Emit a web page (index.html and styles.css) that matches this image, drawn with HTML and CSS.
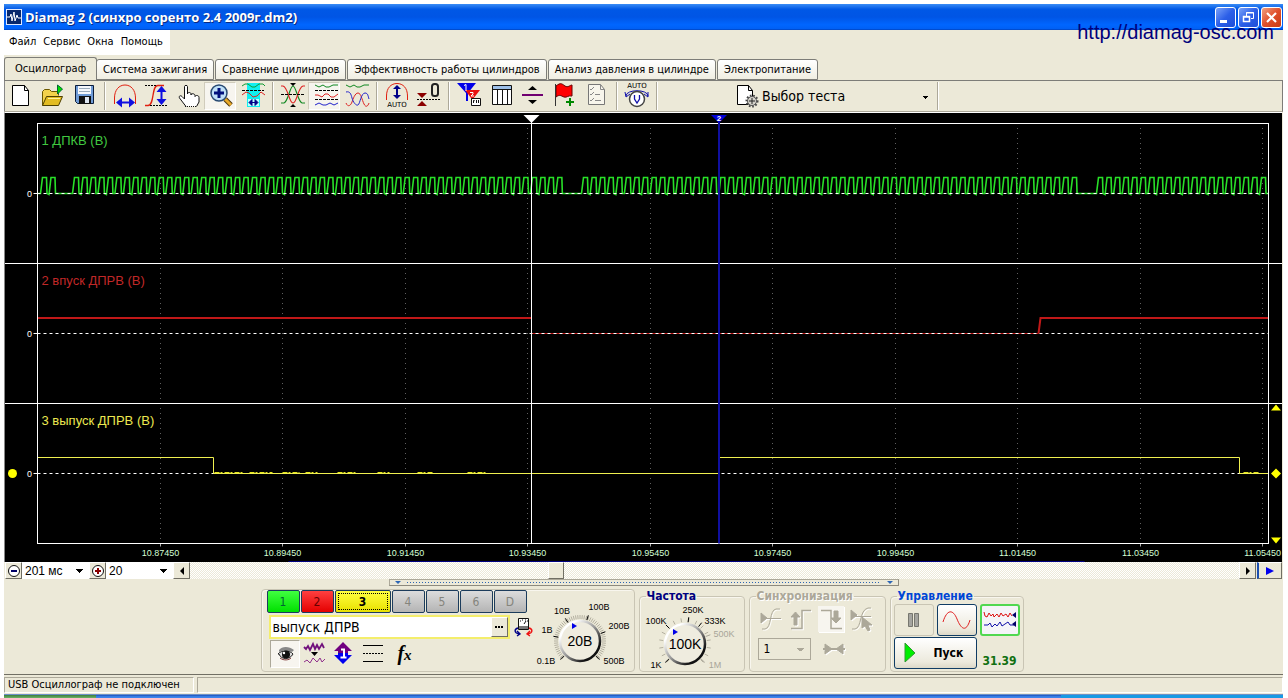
FILE: index.html
```html
<!DOCTYPE html>
<html lang="ru">
<head>
<meta charset="utf-8">
<title>Diamag 2</title>
<link rel="stylesheet" href="styles.css">
</head>
<body>
<div class="window">
  <header class="titlebar">
    <svg class="app-icon" width="16" height="16" viewBox="0 0 16 16"><rect width="16" height="16" fill="#dfe8ff"/><rect x="1" y="1" width="14" height="14" fill="#08286c"/><path d="M1 8h3l1-3 1 7 2-9 1 9 2-6 1 3h3" fill="none" stroke="#fff"/></svg>
    <h1 class="title">Diamag 2 (синхро соренто 2.4 2009г.dm2)</h1>
    <button class="win-btn" aria-label="Свернуть"><svg width="19" height="19"><path d="M4 13.500h7" stroke="#fff" stroke-width="3"/></svg></button>
    <button class="win-btn" aria-label="Развернуть"><svg width="19" height="19" fill="none" stroke="#fff"><path d="M7.500 8V4.500h7v6H12M7 5h8"/><path d="M4.500 8.500h6v5h-6zM4 9h7" stroke-width="1.500"/></svg></button>
    <button class="win-btn win-close" aria-label="Закрыть"><svg width="19" height="19"><path d="M5 5l9 9M14 5l-9 9" stroke="#fff" stroke-width="2.200"/></svg></button>
  </header>
  <a class="site-link" href="#">http://diamag-osc.com</a>
  <nav class="menu">
    <a href="#">Файл</a><a href="#">Сервис</a><a href="#">Окна</a><a href="#">Помощь</a>
  </nav>
  <div class="tabs" role="tablist">
    <button class="tab tab-active" role="tab">Осциллограф</button>
    <button class="tab" role="tab">Система зажигания</button>
    <button class="tab" role="tab">Сравнение цилиндров</button>
    <button class="tab" role="tab">Эффективность работы цилиндров</button>
    <button class="tab" role="tab">Анализ давления в цилиндре</button>
    <button class="tab" role="tab">Электропитание</button>
  </div>

  <div class="toolbar" role="toolbar">
    <button class="tool" aria-label="Новый"><svg viewBox="0 0 32 28"><path d="M8.500 3.500h12l4 5v15h-16z" fill="#fff" stroke="#000"/><path d="M20.500 3.500v5h4" fill="none" stroke="#000"/></svg></button>
    <button class="tool" aria-label="Открыть"><svg viewBox="0 0 32 28"><path d="M6.500 23.500v-14l2-2h5l2 2h7v4" fill="#f3d24c" stroke="#6b5800"/><path d="M6.500 23.500l4-9h16l-4 9z" fill="#e2bc22" stroke="#4d4000"/><path d="M12 16.500h12" stroke="#fff3a0"/><path d="M21.500 3v9l5-5z" fill="#0d0" stroke="#063"/></svg></button>
    <button class="tool" aria-label="Сохранить"><svg viewBox="0 0 32 28"><path d="M7.500 3.500h18v18h-16l-2-2z" fill="#6f9bd6" stroke="#0b1d3a"/><path d="M10 4h13v8H10z" fill="#f4f7fc"/><path d="M11 6.500h11M11 9.500h11" stroke="#9ab"/><path d="M11 14h12v8H11z" fill="#111"/><path d="M17 15h4v6h-4z" fill="#dde5f0"/></svg></button>
    <i class="sep"></i>
    <button class="tool" aria-label="Развёртка"><svg viewBox="0 0 32 28"><path d="M6.500 22v-6C6.500 8 11 3 17 3s10.500 5 10.500 13v6" fill="none" stroke="#e02010"/><path d="M8 20.500l6-5v4h7v-4l6 5-6 5v-4h-7v4z" fill="#1010e0"/></svg></button>
    <button class="tool" aria-label="Усиление"><svg viewBox="0 0 32 28"><path d="M5 23.500h3C15 23 11 3.500 18 3.500h6" fill="none" stroke="#e02010" stroke-width="1.300"/><path d="M5 3.500h12M10 23.500h17" stroke="#000" stroke-dasharray="2 1"/><path d="M21.500 4l5 6h-4v7h4l-5 6-5-6h4v-7h-4z" fill="#1010e0"/></svg></button>
    <button class="tool" aria-label="Рука"><svg viewBox="0 0 32 28"><path d="M14 24.500L7.500 16c-1-2 1-3 2.500-1.500l2.500 2.500V4.500c0-1.500 3-1.500 3 0V12c0-2 3.500-2 3.500 0v1c0-2 4-1.500 4 .5v1c.5-1.500 4-1.500 4 1V20l-2.500 4.500" fill="#fff" stroke="#111"/><path d="M13 24.500h12" stroke="#111" stroke-dasharray="1 1"/></svg></button>
    <button class="tool tool-on" aria-label="Масштаб"><svg viewBox="0 0 32 28"><path d="M21 17l6 6" stroke="#4b3610" stroke-width="5"/><path d="M21 17l6 6" stroke="#e8a92a" stroke-width="3"/><circle cx="15" cy="11" r="8" fill="#bfe0f8" stroke="#284a72" stroke-width="1.500"/><path d="M15 6v10M10 11h10" stroke="#00107c" stroke-width="3"/></svg></button>
    <button class="tool" aria-label="Окно измерения"><svg viewBox="0 0 32 28"><path d="M11 1h13v24H11z" fill="#10f0f0"/><path d="M6 4l3-2h3l4 3h3l4-3h4l2 2" fill="none" stroke="#119a33"/><path d="M6 13l4-3 3 1 4 4 4-1 4-4 4 3" fill="none" stroke="#d22"/><path d="M6 8.500h22" stroke="#000" stroke-dasharray="3 1"/><path d="M12 17h11v7H12z" fill="#bff"/><path d="M13 20.500l3-3v6zM22 20.500l-3-3v6zM15 20.500h5" fill="#008" stroke="#008"/></svg></button>
    <i class="sep"></i>
    <button class="tool" aria-label="Выравнивание"><svg viewBox="0 0 32 28"><path d="M5 21h3C12 20 14 4 17 4s5 16 9 17h3" fill="none" stroke="#118822" stroke-width="1.200"/><path d="M5 4h2c5 1 6 17 10 17S22 5 27 4h2" fill="none" stroke="#d22" stroke-width="1.200"/><path d="M5 12.500h24" stroke="#000" stroke-dasharray="3 1"/><path d="M14 1h6l-3 3zM14 25h6l-3-3z"/></svg></button>
    <button class="tool tool-on" aria-label="Раздельно"><svg viewBox="0 0 32 28" fill="none"><path d="M7 3l4 2 4-2 3 2h3l4-2h5" stroke="#118822"/><path d="M7 13l3 0 4 2 3-3h3l3 3h3l4-3" stroke="#d22"/><path d="M7 23l4-2 4 2h3l4-2 4 2 4-2" stroke="#22c"/><path d="M7 8.500h23M7 17.500h23" stroke="#000" stroke-dasharray="3 1"/></svg></button>
    <button class="tool" aria-label="Совместно"><svg viewBox="0 0 32 28" fill="none"><path d="M6 3l4 2 4-2 3 2h3l4-2h5" stroke="#118822"/><path d="M6 21c2 5 5 2 6-1s3-9 6-9 4 7 6 11 4 2 5-1" stroke="#d22"/><path d="M6 10c4-1 5 2 6 6s4 8 6 7 3-12 7-12c3 0 3 3 4 6" stroke="#22c"/></svg></button>
    <i class="sep"></i>
    <button class="tool" aria-label="Авто амплитуда"><svg viewBox="0 0 32 28"><path d="M6.500 18v-4C6.500 6 11 1.500 17 1.500S27.500 6 27.500 14v4" fill="none" stroke="#e02010"/><path d="M17 3l4 4h-3v6h3l-4 4-4-4h3V7h-3z" fill="#008"/><text x="17" y="25" class="auto">AUTO</text></svg></button>
    <button class="tool" aria-label="Установка нуля"><svg viewBox="0 0 32 28"><path d="M5 11h10l-5 5zM5 24h10l-5-5z" fill="#8b0000"/><path d="M5 17.500h23" stroke="#000" stroke-dasharray="2 1"/><rect x="20" y="2" width="6" height="12" rx="2.500" fill="none" stroke="#222" stroke-width="2"/></svg></button>
    <i class="sep"></i>
    <button class="tool" aria-label="Маркеры"><svg viewBox="0 0 32 28"><path d="M5 1h19l-8 10v8h-2v-8z" fill="#0000e8"/><path d="M13 8h15l-7 9v4h-2v-5z" fill="#e81010"/><path d="M12 3.500l2-1V9" stroke="#fff" fill="none"/><path d="M18 10.500h3v1.500l-2 2h3" stroke="#fff" fill="none"/><path d="M19.500 16.500h9v7h-9z" fill="#fff" stroke="#111"/><path d="M21.500 21v-2.500h1M24.500 21v-3M26.500 21v-3" stroke="#111"/></svg></button>
    <button class="tool" aria-label="Таблица"><svg viewBox="0 0 32 28"><path d="M8.500 3.500h19v19h-19z" fill="#fff" stroke="#111"/><path d="M9 4h18v3H9z" fill="#9dbfe8"/><path d="M8.500 7.500h19M13.500 7.500v15M18.500 7.500v15M23.500 7.500v15" stroke="#111"/></svg></button>
    <button class="tool" aria-label="Разделение"><svg viewBox="0 0 32 28"><path d="M12 8h9l-4.500-4zM12 18h9l-4.500 4z"/><path d="M6 13h21" stroke="#700070" stroke-width="2"/></svg></button>
    <button class="tool" aria-label="Добавить метку"><svg viewBox="0 0 32 28"><path d="M8 4c5-4 6-2 9 0s5-1 7-1v11c-4-1-5 2-8 1s-4-3-8 0z" fill="#f00" stroke="#600"/><path d="M7.500 2v22" stroke="#333"/><path d="M22 16v8M18 20h8" stroke="#080" stroke-width="2"/></svg></button>
    <button class="tool" aria-label="Отчёт" disabled><svg viewBox="0 0 32 28"><path d="M8.500 2.500h12l4 5v15h-16z" fill="#f7f5ec" stroke="#777"/><path d="M20.500 2.500v5h4M10 7l1 1 3-3M10 12l1 1 3-3M10 18l1 1 3-3M15 12.500h5M15 18.500h6" fill="none" stroke="#888"/></svg></button>
    <i class="sep"></i>
    <button class="tool" aria-label="Авто вольтметр"><svg viewBox="0 0 32 28"><text x="17" y="6" class="auto">AUTO</text><path d="M6 14c0-7 22-7 22 0" fill="none" stroke="#11a"/><path d="M5 10l1 5 4-3M28 10l0 5-4-3" fill="none" stroke="#11a"/><circle cx="17" cy="17" r="7.500" fill="#fff" stroke="#444" stroke-width="1.500"/><path d="M14.500 13v4l2.500 4 2.500-4v-4" fill="none" stroke="#11a" stroke-width="1.300"/></svg></button>
    <i class="sep"></i>
    <label class="test-pick">
      <svg width="24" height="24" viewBox="0 0 24 24"><path d="M2.500 1.500h11l4 5v14h-15z" fill="#fff" stroke="#000"/><path d="M13.500 1.500v5h4" fill="none" stroke="#000"/><circle cx="17" cy="17" r="5" fill="#c8c8c4" stroke="#444" stroke-width="3" stroke-dasharray="1.500 1.500"/><circle cx="17" cy="17" r="4.500" fill="#d4d2ca" stroke="#555"/><path d="M17 14v6M14 17h6" stroke="#222"/></svg>
      <select class="test-select" aria-label="Выбор теста"><option>Выбор теста</option></select>
    </label>
    <i class="sep"></i>
  </div>

  <main class="scope"><svg class="scope-svg" id="scope" role="img" aria-label="Осциллограммы"></svg></main>

  <div class="scrollrow">
    <button class="mini" aria-label="Уменьшить"><svg width="16" height="16"><circle cx="8" cy="8" r="5.500" fill="#fff" stroke="#111"/><path d="M5 8h6" stroke="#006" stroke-width="2"/></svg></button>
    <select class="scale" aria-label="Развёртка"><option>201 мс</option></select>
    <button class="mini" aria-label="Увеличить"><svg width="16" height="16"><circle cx="8" cy="8" r="5.500" fill="#fff" stroke="#111"/><path d="M5 8h6M8 5v6" stroke="#800" stroke-width="2"/></svg></button>
    <select class="scale" aria-label="Масштаб"><option>20</option></select>
    <button class="mini" aria-label="Влево"><svg width="16" height="16"><path d="M10 4v8l-4-4z"/></svg></button>
    <div class="track"><button class="thumb" aria-label="Прокрутка"></button></div>
    <button class="mini" aria-label="Вправо"><svg width="16" height="16"><path d="M6 4v8l4-4z"/></svg></button>
    <button class="mini mini-end" aria-label="В конец"><svg width="16" height="16"><path d="M4 4v8l8-4z" fill="#00e"/></svg></button>
  </div>

  <div class="splitter"><svg width="8" height="4"><path d="M1 0h6L4 3z" fill="#2d66b4"/></svg><span class="dots"></span><svg width="8" height="4"><path d="M1 0h6L4 3z" fill="#2d66b4"/></svg></div>

  <section class="panels">
    <div class="group group-channel">
      <div class="channel">
        <div class="ch-buttons">
          <button class="ch ch-1">1</button><button class="ch ch-2">2</button><button class="ch ch-3">3</button><button class="ch" disabled>4</button><button class="ch" disabled>5</button><button class="ch" disabled>6</button><button class="ch" disabled>D</button>
        </div>
        <div class="name-row">
          <div class="name-box"><input class="name" value="выпуск ДПРВ" aria-label="Имя канала"><button class="more" aria-label="Ещё"><svg width="14" height="18"><path d="M3 9h2M6 9h2M9 9h2" stroke="#000" stroke-width="2"/></svg></button></div>
          <button class="ico" aria-label="Прибор"><svg width="20" height="22" viewBox="0 0 20 22"><path d="M4.500 2.500h10v11h-10z" fill="#fff" stroke="#111"/><path d="M5 10h9v3H5z" fill="#777"/><path d="M6 5h1M8 4h1M11 4h1M13 5h1M10 8l2-3" stroke="#111"/><path d="M4 12c-4 1-4 5 1 6m-2-3l3 3-3 2" fill="none" stroke="#008" stroke-width="1.400"/><path d="M15 12c4 1 4 5-1 6m2-3l-3 3 3 2" fill="none" stroke="#e11" stroke-width="1.400"/></svg></button>
        </div>
        <div class="ch-tools">
          <button class="ico ico-on" aria-label="Видимость"><svg width="28" height="26" viewBox="0 0 28 26"><path d="M8 9c3-4 10-4 15 0l-2 2c-4-2-9-2-13 0z" fill="#888"/><path d="M7 13c3-4 12-4 15 0-3 6-12 6-14 0z" fill="#ddd" stroke="#222"/><circle cx="15" cy="13.500" r="4" fill="#111"/><path d="M9 17c4 3 9 2 11 0" stroke="#733" fill="none"/><circle cx="13" cy="12" r="1.200" fill="#fff"/></svg></button>
          <button class="ico" aria-label="Фильтр"><svg width="28" height="26" viewBox="0 0 28 26" fill="none"><path d="M4 6l2 2 2-3 2 4 3-6 2 5 2-4 2 4 3-5 2 4" stroke="#70107c" stroke-width="1.800"/><path d="M11 11h7l-3.500 4z" fill="#000"/><path d="M4 21l3-2 3 3 3-5 4 4 3-4 2 4 3-3" stroke="#90308c"/></svg></button>
          <button class="ico" aria-label="Сдвиг"><svg width="30" height="26" viewBox="0 0 30 26"><path d="M15 1l9 9h-4v3H10v-3H6z" fill="#700080"/><path d="M15 23l9-9h-4v-2H10v2H6z" fill="#0000f0"/><path d="M13 8.500h3V16M12.500 16.500h6" fill="none" stroke="#fff" stroke-width="2"/></svg></button>
          <button class="ico" aria-label="Линии"><svg width="30" height="26"><path d="M5 4.500h20M5 20.500h20" stroke="#000"/><path d="M5 12.500h20" stroke="#000" stroke-dasharray="2 1"/></svg></button>
          <button class="ico fx" aria-label="Функция"><i>f</i><i class="fx-x">x</i></button>
        </div>
      </div>
      <svg class="dial" id="dial-volts" width="98" height="76" role="img" aria-label="Вольт"></svg>
    </div>

    <fieldset class="group group-freq">
      <legend class="navy">Частота</legend>
      <svg class="dial" id="dial-freq" width="98" height="76" role="img" aria-label="Частота"></svg>
    </fieldset>

    <fieldset class="group group-sync" disabled>
      <legend class="grey">Синхронизация</legend>
      <div class="sync-row">
        <svg width="26" height="26" viewBox="0 0 26 26" class="dis"><path d="M3 7v10l6-5z" fill="#aca899"/><path d="M3 12.500h20M4 23h3C14 22 11 4 18 3h4"/></svg>
        <svg width="26" height="26" viewBox="0 0 26 26" class="dis"><path d="M3 22.500h11v-18h9" stroke-width="1.500"/><path d="M7.500 6l4.500 5H9v8H6v-8H3z" fill="#aca899"/></svg>
        <svg width="26" height="26" viewBox="0 0 26 26" class="dis pressed"><path d="M3 4.500h10v18h11" stroke-width="1.500"/><path d="M18 17l-5-5h3V5h4v7h3z" fill="#aca899"/></svg>
        <svg width="26" height="26" viewBox="0 0 26 26" class="dis"><path d="M3 4v10l6-5z" fill="#aca899"/><path d="M3 10.500h20M4 23h3C14 22 11 4 20 2h3"/><path d="M14 11v11l3-2 3 5 2-1-2-5h4z" fill="#aca899"/></svg>
      </div>
      <div class="sync-row sync-low">
        <select class="sync-num" aria-label="Канал синхронизации"><option>1</option></select>
        <svg width="26" height="20" viewBox="0 0 26 20" class="dis"><path d="M4 5l7 5-7 5zM22 5l-7 5 7 5z" fill="#aca899"/><path d="M2 10h22" stroke-width="2"/></svg>
      </div>
    </fieldset>

    <fieldset class="group group-run">
      <legend class="blue">Управление</legend>
      <div class="run-grid">
        <button class="rb rb-off" aria-label="Пауза" disabled><svg width="18" height="18"><path d="M3.500 2.500h4v13h-4zM9.500 2.500h4v13h-4z" fill="#a5a5a0" stroke="#77776f"/></svg></button>
        <button class="rb" aria-label="Синус"><svg width="32" height="24"><path d="M2 14C6 1 12 1 16 11s9 14 13 1" fill="none" stroke="#e02020"/></svg></button>
        <button class="rb rb-green" aria-label="Сигналы"><svg width="34" height="24" fill="none"><path d="M1 4l1 4 2 1 2-4 2 3 2-2 1 3 3-3 2 3 2-4 2 3 3-2 2 3 2-4 2 3" stroke="#d11"/><path d="M1 17h4l2-2 2 4 3-3 2 2 3-4 2 4 3-2 3-2 2 3h4" stroke="#11a"/><path d="M33 4v6l-4-3zM33 13v6l-4-3z" fill="#006"/></svg></button>
        <button class="rb rb-start"><svg width="14" height="22"><path d="M1 1v19l10-9z" fill="#0e0" stroke="#393"/></svg><span>Пуск</span></button>
        <output class="reading">31.39</output>
      </div>
    </fieldset>
  </section>

  <footer class="status"><span class="cell cell-usb">USB Осциллограф не подключен</span><span class="cell cell-rest"></span></footer>
  <div class="taskbar"><i class="start"></i><i class="tray"></i></div>
</div>
<script src="script.js"></script>
</body>
</html>
```

FILE: styles.css
```css
* { box-sizing: border-box; }
body { margin: 0; background: #fff; font: 11px/14px "DejaVu Sans Condensed", "DejaVu Sans", sans-serif; color: #000; }
button, select, input { font: inherit; color: inherit; margin: 0; padding: 0; border: 0; border-radius: 0; background: none; }
select { appearance: none; }
a { color: inherit; text-decoration: none; }
svg { display: block; }
.window { position: relative; display: flex; flex-direction: column; min-height: 100vh; margin: 0 5px 0 4px; padding-top: 4px; background: linear-gradient(#fff 4px, #ece9d8 4px); }

.titlebar { display: flex; align-items: center; gap: 2px; height: 26px; padding: 0 1px 0 2px; background: linear-gradient(#3a8cf5, #0058e6 20%, #0055e5 50%, #0066ff 80%, #0060f5 95%, #0040b8); }
.title { flex: 1; margin: 0 0 0 1px; font: bold 13px/20px "Open Sans", "Noto Sans", sans-serif; color: #fff; text-shadow: 1px 1px #0a2a80; }
.win-btn { display: grid; place-items: center; width: 21px; height: 21px; border: 1px solid #fff; border-radius: 3px; background: linear-gradient(135deg, #7aa2f8, #2c5fe8 50%, #1e4fd8); }
.win-close { background: linear-gradient(135deg, #f0a080, #e0502c 50%, #c83c14); }
.site-link { position: absolute; right: 9px; top: 21px; font: 20px/23px "Liberation Sans", Arial, sans-serif; color: #00007c; }
.menu { display: flex; gap: 7px; align-self: flex-start; height: 25px; padding: 5px 7px 0 5px; background: #fff; }

.tabs { display: flex; align-items: flex-end; height: 25px; }
.tab { height: 21px; padding: 0 6px; border: 1px solid #7d7d78; border-radius: 3px 3px 0 0; margin-right: 1px; background: linear-gradient(#fff, #f0eee2); }
.tab-active { height: 23px; margin-right: -1px; padding: 0 10px; border-bottom: 0; background: #ece9d8; }
.toolbar { display: flex; align-items: center; height: 32px; border: solid #7d7d78; border-width: 1px 1px 1px 0; border-bottom-color: #aca899; box-shadow: inset 1px 0 #888; }
.tool { flex: none; width: 32px; height: 28px; }
.tool svg { width: 32px; height: 28px; }
.tool-on { background: #f7f5ef; border: 1px solid; border-color: #d0ccbc #fff #fff #d0ccbc; }
.tool-on svg { margin: -1px; }
.sep { flex: none; width: 8px; height: 28px; background: linear-gradient(90deg, transparent 4px, #aca899 4px, #aca899 5px, #fff 5px, #fff 6px, transparent 6px); }
.auto { font: 7px "DejaVu Sans", sans-serif; text-anchor: middle; }
.test-pick { display: flex; align-items: center; gap: 3px; width: 198px; margin-left: 75px; }
.test-select {
  flex: 1; height: 22px; font-size: 14px;
  background:
    linear-gradient(#000, #000) right 5px top 11px / 5px 1px no-repeat,
    linear-gradient(#000, #000) right 6px top 12px / 3px 1px no-repeat,
    linear-gradient(#000, #000) right 7px top 13px / 1px 1px no-repeat;
}

.scope { flex: 1; position: relative; min-height: 300px; margin-right: 1px; border-left: 1px solid #888; border-top: 1px solid #fff; background: #000; }
.scope-svg { position: absolute; width: 100%; height: 100%; }
.sig { font: 13px "Liberation Sans", sans-serif; }
.tick { font: 9px "Liberation Sans", sans-serif; fill: #d4ffd4; }
.zero { fill: #fff; }
.marker { font: bold 8px "Liberation Sans", sans-serif; fill: #fff; text-anchor: middle; }

.scrollrow { display: flex; height: 17px; padding-left: 1px; }
.mini { flex: none; width: 17px; height: 17px; display: grid; place-items: center; border: 1px solid; border-color: #fff #716f64 #716f64 #fff; background: #ece9d8; }
.mini-end { width: 25px; margin: 0 1px; border-left: 2px solid #1c4fb0; }
.scale {
  width: 67px; padding-left: 3px; font: 12px "Liberation Sans", sans-serif;
  background:
    linear-gradient(#000, #000) right 6px top 7px / 7px 1px no-repeat,
    linear-gradient(#000, #000) right 7px top 8px / 5px 1px no-repeat,
    linear-gradient(#000, #000) right 8px top 9px / 3px 1px no-repeat,
    linear-gradient(#000, #000) right 9px top 10px / 1px 1px no-repeat,
    #fff;
}
.track { flex: 1; display: flex; padding-left: 28%; background: repeating-conic-gradient(#ece9d8 0 25%, #fff 0 50%) 0 0 / 2px 2px; }
.thumb { width: 16px; border: 1px solid; border-color: #fff #716f64 #716f64 #fff; background: #ece9d8; }

.splitter { display: flex; align-items: center; gap: 5px; align-self: center; width: 510px; height: 7px; padding: 0 4px; border: 1px solid; border-color: #aca899 #8d8a7e #8d8a7e #aca899; }
.dots { flex: 1; height: 1px; background: repeating-linear-gradient(90deg, #2d66b4 0 1px, transparent 1px 3px); }

.panels { display: flex; justify-content: center; gap: 4px; height: 89px; padding: 3px 3px 2px 0; border-bottom: 1px solid #716f64; }
.group { display: flex; min-width: 0; margin: 0; padding: 0; border: 1px solid #c9c5b4; border-radius: 4px; box-shadow: inset 1px 1px #f8f6ee; }
.group legend { padding: 0 1px; margin-left: 6px; height: 14px; font-size: 12px; font-weight: bold; }
.navy { color: #000080; }
.grey { color: #aca899; text-shadow: 1px 1px #fff; }
.blue { color: #0046d5; }
.group-channel { width: 374px; }
.group-freq { width: 106px; }
.group-sync { display: block; width: 137px; }
.group-run { display: block; width: 134px; }
.channel { width: 272px; padding-left: 5px; }
.ch-buttons { display: flex; gap: 1px; }
.ch { width: 33px; height: 23px; border: 1px solid #1c3c5c; border-radius: 2px; background: linear-gradient(#dcdcdc, #b4b4b4); color: #84847c; font-size: 12px; }
.ch-1 { background: linear-gradient(#40ff40, #00e000); color: #063; }
.ch-2 { background: linear-gradient(#ff4040, #e40000); color: #600; }
.ch-3 { width: 56px; background: linear-gradient(#ffff40, #e8e000); color: #000; font-weight: bold; outline: 1px dotted #000; outline-offset: -4px; }
.name-row { display: flex; align-items: center; gap: 4px; margin: 2px 0 0 2px; }
.name-box { display: flex; width: 242px; height: 24px; border: 2px solid #f4ee6c; background: #fff; }
.name { flex: 1; min-width: 0; padding-left: 2px; font-size: 14px; outline: 0; }
.more { width: 17px; border: 1px solid; border-color: #fff #716f64 #716f64 #fff; background: #ece9d8; }
.ch-tools { display: flex; align-items: center; margin-left: 3px; height: 29px; }
.ico { flex: none; min-width: 20px; }
.ico-on { border: 1px solid; border-color: #aca899 #fff #fff #aca899; background: #f7f5ef; }
.fx { width: 34px; font: italic bold 20px/20px "Liberation Serif", serif; }
.fx-x { font-size: 15px; }
.dial { flex: none; margin-top: 3px; }
.group-freq .dial { margin: -6px 0 0 2px; }
.dl { font: 9px "Liberation Sans", sans-serif; text-anchor: middle; }
.dv { font: 14px "Liberation Sans", sans-serif; text-anchor: middle; }
.off { fill: #a8a598; }

.sync-row { display: flex; gap: 4px; padding: 3px 0 0 8px; align-items: center; }
.sync-low { padding-top: 6px; gap: 10px; }
.dis { fill: none; stroke: #aca899; filter: drop-shadow(1px 1px 0 #fff); }
.pressed { background: #f7f5ef; }
.sync-num {
  width: 53px; height: 22px; border: 1px solid #aca899; padding-left: 5px; font-size: 12px; opacity: 1; color: #000;
  background:
    linear-gradient(#aca899, #aca899) right 6px top 9px / 7px 1px no-repeat,
    linear-gradient(#aca899, #aca899) right 7px top 10px / 5px 1px no-repeat,
    linear-gradient(#aca899, #aca899) right 8px top 11px / 3px 1px no-repeat;
}

.run-grid { display: grid; grid-template-columns: 40px 40px 40px; grid-template-rows: 32px 32px; column-gap: 3px; row-gap: 1px; padding: 1px 0 0 3px; }
.rb { display: flex; align-items: center; justify-content: center; border: 1px solid #103c64; border-radius: 3px; background: linear-gradient(#fff, #ece9dc 80%, #dcd8c8); font-weight: bold; font-size: 12px; }
.rb-off { border-color: #c9c5b4; background: #ece9d8; }
.rb-green { border: 2px solid #50d850; background: #f4f4f8; }
.rb-start { grid-column: span 2; justify-content: flex-start; padding-left: 9px; gap: 16px; }
.reading { align-self: end; justify-self: center; color: #107010; font-weight: bold; font-size: 12px; line-height: 16px; }

.status { display: flex; gap: 3px; height: 17px; margin-top: 2px; }
.cell { height: 16px; border: 1px solid; border-color: #aca899 #fff #fff #aca899; padding: 0 3px; line-height: 14px; white-space: nowrap; }
.cell-usb { width: 190px; }
.cell-rest { flex: 1; }
.taskbar { display: flex; justify-content: space-between; height: 4px; background: linear-gradient(#1c50b8, #3c84ec 60%); border-top: 1px solid #6d90c8; }
.start { width: 92px; background: linear-gradient(#3c7c3c, #6cb464); }
.tray { width: 222px; background: #189ae4; }
```

FILE: script.js
```js
const NS = 'http://www.w3.org/2000/svg';

function add(svg, tag, attrs, text) {
  const el = document.createElementNS(NS, tag);
  for (const k in attrs) el.setAttribute(k, attrs[k]);
  if (text !== undefined) el.textContent = text;
  svg.appendChild(el);
  return el;
}

/* Crankshaft signal: 58 teeth and a two-tooth gap per turn, in samples. */
function crankPath(X, zero) {
  const turns = [[3, 2, 8.5], [35, 58, 8.48], [544, 58, 8.58], [1059, 20, 8.58]];
  let d = `M${X(0)} ${zero}`;
  for (const [start, teeth, pitch] of turns) {
    for (let i = 0; i < teeth; i++) {
      const s = start + i * pitch;
      const low = i % 3 === 1 ? zero + 1 : zero;
      d += `L${X(s)} ${low}L${X(s + 2)} ${zero - 16}H${X(s + 6)}L${X(s + 6.5)} ${zero}`;
    }
  }
  return d + `H${X(1231)}`;
}

function drawScope() {
  const svg = document.getElementById('scope');
  svg.replaceChildren();
  const W = svg.clientWidth, H = svg.clientHeight;
  const left = 32.5, right = W - 13.5, top = 10.5, bottom = H - 18.5;
  const row = (bottom - top) / 3;
  const X = s => +(left + s / 1231 * (right - left)).toFixed(2);
  const snap = v => Math.floor(v) + 0.5;
  const line = (x1, y1, x2, y2, stroke, more) =>
    add(svg, 'line', { x1, y1, x2, y2, stroke, ...more });
  const zero = [0, 1, 2].map(i => snap(top + row * i + row / 2));

  for (let i = 0; i < 10; i++) {
    const x = snap(X(122.5 * (i + 1)));
    for (let c = 0; c < 3; c++) {
      const y = Math.floor(top + row * c);
      line(x, y + 5, x, y + row - 4, '#606060', { 'stroke-dasharray': '1 4' });
    }
    line(x, bottom, x, bottom + 3, '#aaa');
    const t = (10.8745 + 0.02 * i).toFixed(5);
    const last = i === 9;
    add(svg, 'text', { x: last ? W - 1 : x, y: bottom + 12.5, class: 'tick', 'text-anchor': last ? 'end' : 'middle' }, t);
  }

  add(svg, 'path', { d: crankPath(X, zero[0]), fill: 'none', stroke: '#28e028', 'stroke-width': 1.6 });
  const red = { fill: 'none', stroke: '#c01818' };
  add(svg, 'path', { d: `M${X(0)} ${zero[1] - 15.5}H${X(494)}`, ...red, 'stroke-width': 2 });
  add(svg, 'path', { d: `M${X(494)} ${zero[1]}H${X(1001)}`, ...red });
  add(svg, 'path', { d: `M${X(1001)} ${zero[1]}L${X(1003)} ${zero[1] - 15.5}H${X(1231)}`, ...red, 'stroke-width': 2 });

  zero.forEach(y => {
    line(left, y, right, y, '#fff', { 'stroke-dasharray': '3 3' });
    line(left - 4, y, left + 2, y, '#fff');
    add(svg, 'text', { x: 22, y: y + 3, class: 'tick zero' }, '0');
  });

  const z = zero[2];
  add(svg, 'path', { d: `M${X(0)} ${z - 16}H${snap(X(176))}V${z}H${X(681)}L${X(682)} ${z - 16}H${snap(X(1202))}V${z}H${X(1231)}`, fill: 'none', stroke: '#f0f050' });
  [[177, 205], [212, 235], [245, 262], [268, 280], [300, 320], [340, 352], [380, 395], [430, 450], [1206, 1222]].forEach(([a, b]) =>
    line(X(a), z - 1, X(b), z - 1, '#e8e820', { 'stroke-dasharray': '5 1 2 2' }));

  add(svg, 'rect', { x: left, y: top, width: right - left, height: bottom - top, fill: 'none', stroke: '#fff' });
  line(0, snap(top + row), W, snap(top + row), '#fff');
  line(0, snap(top + row * 2), W, snap(top + row * 2), '#fff');

  const names = [['1 ДПКВ (В)', '#40c840'], ['2 впуск ДПРВ (В)', '#c02828'], ['3 выпуск ДПРВ (В)', '#ece850']];
  names.forEach(([n, fill], i) => add(svg, 'text', { x: left + 4, y: top + row * i + 21.5, class: 'sig', fill }, n));

  const a = snap(X(494)), b = Math.round(X(681));
  line(a, 4, a, bottom, '#fff');
  add(svg, 'path', { d: `M${a - 8} 2H${a + 8}L${a} 10z`, fill: '#fff' });
  line(b, 8, b, bottom, '#1010a0', { 'stroke-width': 2 });
  add(svg, 'path', { d: `M${b - 8} 2H${b + 8}L${b} 10z`, fill: '#0000d8' });
  add(svg, 'text', { x: b, y: 8, class: 'marker' }, '2');

  const y = top + row * 2, e = W - 6;
  add(svg, 'path', { d: `M${e - 5} ${y + 7}L${e} ${y + 1}L${e + 5} ${y + 7}zM${e - 5} ${bottom - 6}L${e} ${bottom}L${e + 5} ${bottom - 6}zM${e - 5} ${z}L${e} ${z - 5}L${e + 5} ${z}L${e} ${z + 5}z`, fill: '#ff0' });
  add(svg, 'circle', { cx: 7.5, cy: z, r: 4.5, fill: '#ff0' });
  line(X(251), H - 0.5, X(1047), H - 0.5, '#000080');
}

/* Rotary control: labels as [text, x, y, disabled, tick angle]. */
function drawDial(id, value, cx, cy, step, labels, pointer) {
  const svg = document.getElementById(id);
  const defs = add(svg, 'defs', {});
  const g = add(defs, 'linearGradient', { id: id + '-g', x1: 0, y1: 0, x2: 1, y2: 1 });
  add(g, 'stop', { offset: 0.2, 'stop-color': '#fff' });
  add(g, 'stop', { offset: 0.5, 'stop-color': '#999' });
  add(g, 'stop', { offset: 0.8, 'stop-color': '#111' });
  for (let a = 135; a <= 405; a += step) {
    const r = a * Math.PI / 180, c = Math.cos(r), s = Math.sin(r);
    add(svg, 'line', { x1: cx + 22 * c, y1: cy + 22 * s, x2: cx + 26 * c, y2: cy + 26 * s, stroke: '#b4b0a0' });
  }
  for (const [t, x, y, off, a] of labels) {
    const r = a * Math.PI / 180, c = Math.cos(r), s = Math.sin(r);
    add(svg, 'line', { x1: cx + 22 * c, y1: cy + 22 * s, x2: cx + 27 * c, y2: cy + 27 * s, stroke: off ? '#a8a598' : '#000' });
    add(svg, 'text', { x, y, class: off ? 'dl off' : 'dl' }, t);
  }
  add(svg, 'circle', { cx, cy, r: 20, fill: '#efecdf', stroke: `url(#${id}-g)`, 'stroke-width': 2.5 });
  add(svg, 'path', { d: `M${pointer[0]} ${pointer[1]}v6l5-3z`, fill: '#0000e8' });
  add(svg, 'text', { x: cx, y: cy + 5, class: 'dv' }, value);
}

drawDial('dial-volts', '20В', 46, 48, 5, [
  ['0.1В', 12, 71, 0, 137], ['1В', 13, 40, 0, 190], ['10В', 28, 21, 0, 237],
  ['100В', 65, 17, 0, 288], ['200В', 85, 36, 0, 340], ['500В', 80, 71, 0, 43]], [38, 30]);
drawDial('dial-freq', '100K', 43, 47, 18, [
  ['1K', 14, 71, 0, 137], ['100K', 14, 27, 0, 225], ['250K', 51, 16, 0, 278],
  ['333K', 73, 27, 0, 308], ['500K', 82, 40, 1, 340], ['1M', 73, 71, 1, 43]], [31, 32]);
drawScope();
window.addEventListener('resize', drawScope);
```
